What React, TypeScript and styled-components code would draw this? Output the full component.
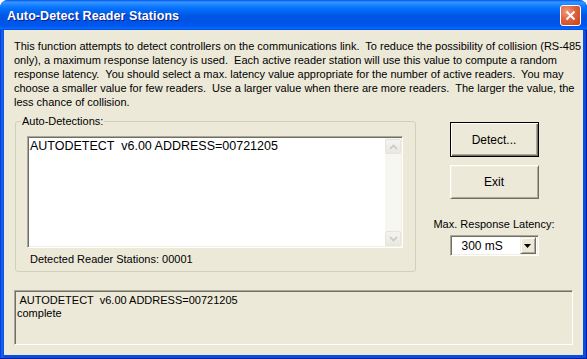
import React from "react";
import styled, { createGlobalStyle } from "styled-components";

const GlobalStyle = createGlobalStyle`
  html, body {
    margin: 0;
    padding: 0;
    background: #ffffff;
  }
  body {
    font-family: "Liberation Sans", Arial, sans-serif;
  }
`;

const Window = styled.div`
  width: 587px;
  height: 359px;
  display: flex;
  flex-direction: column;
  border-radius: 8px 8px 0 0;
  overflow: hidden;
  background: linear-gradient(to right, #0831d9 0px, #166aee 2px, #0a4be0 4px);
  box-shadow: inset -1px -1px #001ea0;
`;

const TitleBar = styled.div`
  height: 30px;
  flex: none;
  display: flex;
  align-items: center;
  justify-content: space-between;
  padding: 0 6px 0 7px;
  background: linear-gradient(
    to bottom,
    #0058ee 0%,
    #3a93ff 7%,
    #288eff 12%,
    #127dff 20%,
    #036ffc 30%,
    #0262ee 42%,
    #0057e5 52%,
    #0054e3 64%,
    #0055eb 82%,
    #005bf5 90%,
    #026afe 95%,
    #0048d0 100%
  );
`;

const Title = styled.span`
  color: #ffffff;
  font: bold 12.5px "Liberation Sans", Arial, sans-serif;
  text-shadow: 1px 1px 0 #0f1e89;
  letter-spacing: 0.1px;
  margin-top: 1px;
`;

const CloseButton = styled.div`
  width: 21px;
  height: 21px;
  box-sizing: border-box;
  border: 1px solid #ffffff;
  border-radius: 3px;
  background: radial-gradient(circle at 30% 30%, #f19a7c 0%, #e1603c 45%, #c8401c 100%);
  display: flex;
  align-items: center;
  justify-content: center;
  margin-top: 1px;
`;

const Body = styled.div`
  flex: 1;
  margin: 0 4px 4px;
  background: #ece9d8;
  padding: 9px 10px 0;
  display: flex;
  flex-direction: column;
  font: 11px "Liberation Sans", Arial, sans-serif;
  color: #000000;
`;

const Description = styled.p`
  margin: 0;
  line-height: 14px;
  white-space: pre;
`;

const MiddleRow = styled.div`
  display: flex;
  align-items: flex-start;
  margin-top: 12px;
`;

const GroupBox = styled.div`
  position: relative;
  width: 401px;
  height: 151px;
  box-sizing: border-box;
  margin-left: 1px;
  border: 1px solid #d0d0bf;
  border-radius: 3px;
  padding: 14px 13px 0 11px;
  display: flex;
  flex-direction: column;
`;

const GroupLabel = styled.span`
  position: absolute;
  top: -7px;
  left: 5px;
  padding: 0 1px;
  background: #ece9d8;
  line-height: 13px;
`;

const ListBox = styled.div`
  width: 376px;
  height: 112px;
  box-sizing: border-box;
  background: #ffffff;
  border: 1px solid;
  border-color: #aca899 #ffffff #ffffff #aca899;
  box-shadow: inset 1px 1px #716f64, inset -1px -1px #f1efe2;
  padding: 1px;
  display: flex;
`;

const ListContent = styled.div`
  flex: 1;
  padding: 0 1px;
  font-size: 12.5px;
  line-height: 16px;
  white-space: pre;
`;

const ScrollBar = styled.div`
  width: 16px;
  display: flex;
  flex-direction: column;
  justify-content: space-between;
  background: #f7f7f2;
  padding-top: 1px;
`;

const ScrollArrow = styled.div`
  width: 16px;
  height: 15px;
  box-sizing: border-box;
  border: 1px solid #e6e5dd;
  border-radius: 2px;
  background: linear-gradient(to bottom, #f4f3ee, #e9e8e0);
  display: flex;
  align-items: center;
  justify-content: center;
`;

const CountText = styled.div`
  margin-top: 5px;
  padding-left: 3px;
  line-height: 13px;
  font-size: 11px;
`;

const RightColumn = styled.div`
  width: 124px;
  margin-left: 16px;
  margin-top: 1px;
  display: flex;
  flex-direction: column;
  align-items: center;
`;

const Button = styled.div<{ $default?: boolean; $height: number; $gap?: number }>`
  width: 89px;
  height: ${(p) => p.$height}px;
  margin-top: ${(p) => p.$gap ?? 0}px;
  box-sizing: border-box;
  display: flex;
  align-items: center;
  justify-content: center;
  font-size: 12px;
  background: #ece9d8;
  border: 1px solid;
  border-color: ${(p) =>
    p.$default ? "#000000" : "#ffffff #716f64 #716f64 #ffffff"};
  box-shadow: ${(p) =>
    p.$default
      ? "inset 1px 1px #ffffff, inset -1px -1px #716f64, inset -2px -2px #aca899"
      : "inset 1px 1px #f1efe2, inset -1px -1px #aca899"};
`;

const LatencyLabel = styled.div`
  margin-top: 19px;
  font-size: 11px;
  line-height: 13px;
  white-space: nowrap;
`;

const Combo = styled.div`
  width: 89px;
  height: 21px;
  margin-top: 4px;
  box-sizing: border-box;
  background: #ffffff;
  border: 1px solid;
  border-color: #aca899 #ffffff #ffffff #aca899;
  box-shadow: inset 1px 1px #716f64, inset -1px -1px #f1efe2;
  padding: 2px;
  display: flex;
  align-items: center;
  font-size: 12px;
`;

const ComboText = styled.span`
  flex: 1;
  padding-left: 9px;
`;

const ComboButton = styled.div`
  width: 16px;
  height: 17px;
  box-sizing: border-box;
  background: #ece9d8;
  border: 1px solid;
  border-color: #f1efe2 #716f64 #716f64 #f1efe2;
  box-shadow: inset 1px 1px #ffffff, inset -1px -1px #aca899;
  display: flex;
  align-items: center;
  justify-content: center;
`;

const StatusPanel = styled.div`
  margin-top: 18px;
  height: 55px;
  box-sizing: border-box;
  border: 1px solid;
  border-color: #aca899 #ffffff #ffffff #aca899;
  box-shadow: inset 1px 1px #716f64;
  padding: 3px 2px 0;
  font-size: 11px;
  line-height: 13px;
  white-space: pre;
`;

const Chevron = ({ up }: { up?: boolean }) => (
  <svg width="9" height="6" viewBox="0 0 9 6">
    <path
      d={up ? "M1 5 L4.5 1.5 L8 5" : "M1 1 L4.5 4.5 L8 1"}
      fill="none"
      stroke="#cbc9bd"
      strokeWidth="1.6"
    />
  </svg>
);

export default function App() {
  return (
    <>
      <GlobalStyle />
      <Window>
        <TitleBar>
          <Title>Auto-Detect Reader Stations</Title>
          <CloseButton>
            <svg width="11" height="11" viewBox="0 0 11 11">
              <path d="M1.5 1.5 L9.5 9.5 M9.5 1.5 L1.5 9.5" stroke="#ffffff" strokeWidth="2" />
            </svg>
          </CloseButton>
        </TitleBar>
        <Body>
          <Description>
            {"This function attempts to detect controllers on the communications link.  To reduce the possibility of collision (RS-485\n" +
              "only), a maximum response latency is used.  Each active reader station will use this value to compute a random\n" +
              "response latency.  You should select a max. latency value appropriate for the number of active readers.  You may\n" +
              "choose a smaller value for few readers.  Use a larger value when there are more readers.  The larger the value, the\n" +
              "less chance of collision."}
          </Description>
          <MiddleRow>
            <GroupBox>
              <GroupLabel>Auto-Detections:</GroupLabel>
              <ListBox>
                <ListContent>AUTODETECT  v6.00 ADDRESS=00721205</ListContent>
                <ScrollBar>
                  <ScrollArrow>
                    <Chevron up />
                  </ScrollArrow>
                  <ScrollArrow>
                    <Chevron />
                  </ScrollArrow>
                </ScrollBar>
              </ListBox>
              <CountText>Detected Reader Stations: 00001</CountText>
            </GroupBox>
            <RightColumn>
              <Button $default $height={35}>
                Detect...
              </Button>
              <Button $height={34} $gap={8}>
                Exit
              </Button>
              <LatencyLabel>Max. Response Latency:</LatencyLabel>
              <Combo>
                <ComboText>300 mS</ComboText>
                <ComboButton>
                  <svg width="7" height="4" viewBox="0 0 7 4">
                    <path d="M0 0 H7 L3.5 4 Z" fill="#000000" />
                  </svg>
                </ComboButton>
              </Combo>
            </RightColumn>
          </MiddleRow>
          <StatusPanel>
            {" AUTODETECT  v6.00 ADDRESS=00721205\ncomplete"}
          </StatusPanel>
        </Body>
      </Window>
    </>
  );
}
